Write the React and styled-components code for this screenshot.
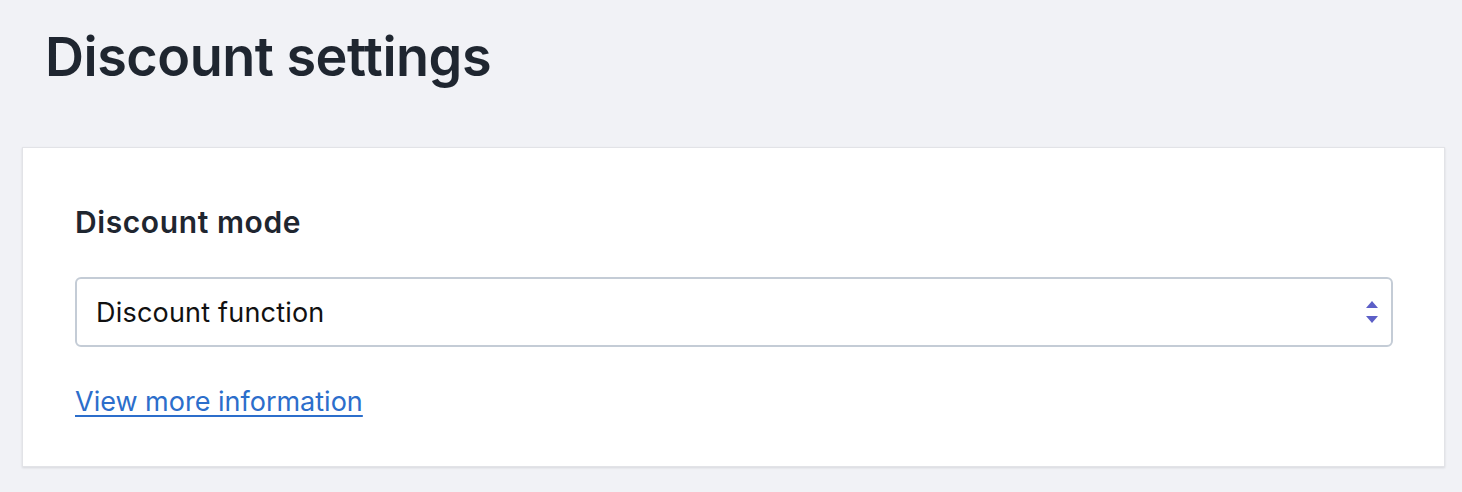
import React from "react";
import styled, { createGlobalStyle } from "styled-components";

const Global = createGlobalStyle`
  html, body { margin: 0; padding: 0; background: #f1f2f6; }
  body { font-family: Inter, "Noto Sans", sans-serif; color: #1f2630; }
`;

const Page = styled.div`
  padding: 19px 17px 26px 22px;
  display: flex;
  flex-direction: column;
`;

const Title = styled.h1`
  margin: 0;
  padding: 0 0 0 23px;
  font-size: 54px;
  line-height: 76px;
  font-weight: 600;
  letter-spacing: -0.5px;
  color: #1f2630;
`;

const Card = styled.section`
  margin-top: 52px;
  background: #fff;
  border: 1px solid #e2e3e7;
  box-shadow: 0 1px 2px rgba(30, 35, 50, 0.12);
  padding: 56px 51px 49px 52px;
  display: flex;
  flex-direction: column;
`;

const Label = styled.div`
  font-size: 30px;
  line-height: 36px;
  font-weight: 600;
  letter-spacing: 0.6px;
  color: #1f2630;
`;

const SelectBox = styled.div`
  margin-top: 37px;
  height: 70px;
  box-sizing: border-box;
  border: 2px solid #c4ccd6;
  border-radius: 6px;
  display: flex;
  align-items: center;
  justify-content: space-between;
  padding: 0 12px 0 19px;
  font-size: 27px;
  letter-spacing: 0.2px;
  color: #111;
`;

const Arrows = styled.svg`
  width: 14px;
  height: 24px;
  flex: none;
`;

const Link = styled.a`
  margin-top: 39px;
  margin-bottom: -1px;
  font-size: 27px;
  line-height: 32px;
  color: #2c6ecb;
  text-decoration: underline;
  text-underline-offset: 4px;
  text-decoration-thickness: 2px;
  align-self: flex-start;
`;

export default function App() {
  return (
    <>
      <Global />
      <Page>
        <Title>Discount settings</Title>
        <Card>
          <Label>Discount mode</Label>
          <SelectBox>
            <span>Discount function</span>
            <Arrows viewBox="0 0 14 24">
              <polygon points="1,8 7,1 13,8" fill="#5c5fc7" />
              <polygon points="1,16 13,16 7,23" fill="#5c5fc7" />
            </Arrows>
          </SelectBox>
          <Link href="#">View more information</Link>
        </Card>
      </Page>
    </>
  );
}
